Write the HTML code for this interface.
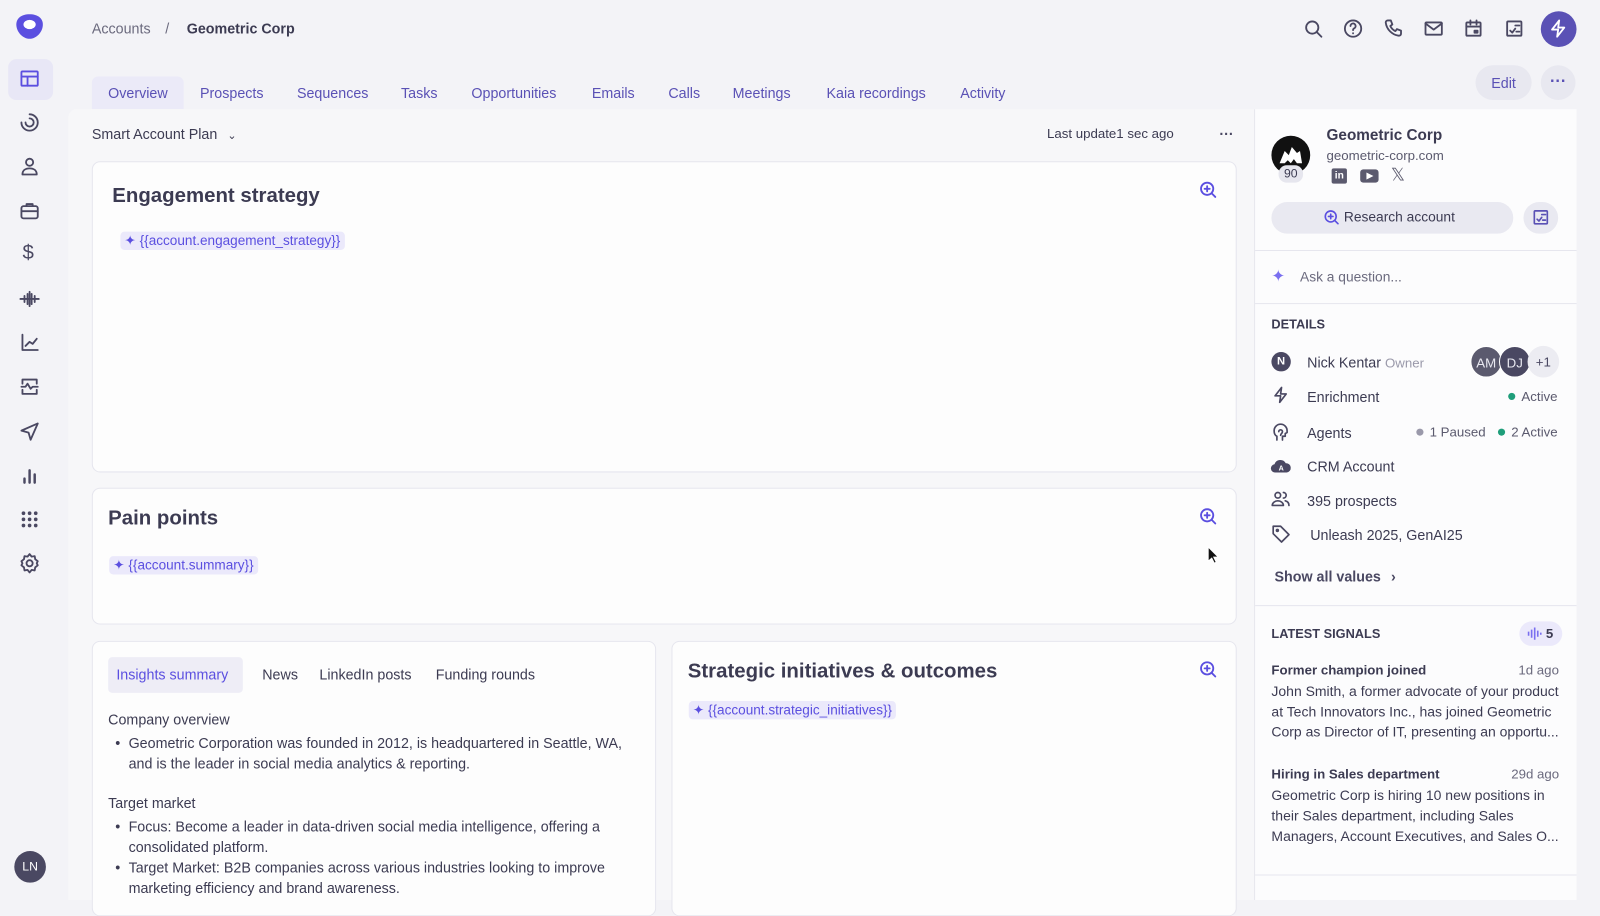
<!DOCTYPE html>
<html><head><meta charset="utf-8"><style>
*{box-sizing:border-box;margin:0;padding:0}
body{width:1600px;height:900px;overflow:hidden;background:#f3f3f7;font-family:"Liberation Sans",sans-serif;color:#3c3b52}
#w{position:absolute;left:0;top:0;width:1568px;height:882px;transform:scale(1.020408);transform-origin:0 0}
.a{position:absolute}
.ic{position:absolute;width:22px;height:22px;fill:none;stroke:#4a4862;stroke-width:1.8;stroke-linecap:round;stroke-linejoin:round}
.t{position:absolute;font-size:14px;white-space:nowrap}
.tab{position:absolute;top:83px;font-size:14px;color:#5a51b5}
.card{position:absolute;background:#fdfdfd;border:1px solid #e6e6ee;border-radius:8px}
.chip{position:absolute;background:#ebe9fb;color:#5b4fe0;font-size:13.3px;border-radius:4px;padding:1px 4px;white-space:nowrap}
.h{position:absolute;font-size:20px;font-weight:bold;color:#3c3b52;white-space:nowrap}
.zoom{position:absolute;width:18px;height:18px;fill:none;stroke:#5b4fe0;stroke-width:1.8;stroke-linecap:round}
.dot{display:inline-block;width:7px;height:7px;border-radius:50%;margin-right:6px;vertical-align:1px}
.li{position:absolute;font-size:14px;color:#3c3b52;line-height:20px}
</style></head><body><div id="w">
<!-- sidebar -->
<svg class="a" style="left:15px;top:13px" width="28" height="26" viewBox="0 0 28 26"><path d="M14 1C6 1 1 5 1 11c0 7 6 14 13 14s13-7 13-14C27 5 22 1 14 1z" fill="#5b4fe0"/><ellipse cx="14" cy="11" rx="6" ry="4.5" fill="#fff"/></svg>
<div class="a" style="left:8px;top:58px;width:44px;height:40px;background:#e8e7f6;border-radius:8px"></div>
<svg class="ic" style="left:18px;top:66px;stroke:#5b4fe0" viewBox="0 0 22 22"><rect x="3" y="4" width="16" height="14" rx="1"/><path d="M3 9h16M9 9v9"/></svg>
<svg class="ic" style="left:18px;top:109px" viewBox="0 0 22 22"><path d="M11 3a8 8 0 1 1-8 8"/><path d="M11 7a4 4 0 1 1-4 4"/></svg>
<svg class="ic" style="left:18px;top:152px" viewBox="0 0 22 22"><circle cx="11" cy="7" r="3.5"/><path d="M4 19c0-4 3-6 7-6s7 2 7 6z"/></svg>
<svg class="ic" style="left:18px;top:196px" viewBox="0 0 22 22"><rect x="3" y="6" width="16" height="12" rx="2"/><path d="M8 6V4h6v2M3 11h16"/></svg>
<div class="t" style="left:22px;top:237px;font-size:20px;color:#4a4862">$</div>
<svg class="ic" style="left:18px;top:282px" viewBox="0 0 22 22"><path d="M2 11h18M6 8v6M9 6v10M11 4v14M13 6v10M16 8v6"/></svg>
<svg class="ic" style="left:18px;top:325px" viewBox="0 0 22 22"><path d="M4 3v15h15M7 14l4-4 3 2 4-5"/></svg>
<svg class="ic" style="left:18px;top:368px" viewBox="0 0 22 22"><path d="M4 8V4h14v4M4 14v4h14v-4M3 11h4l2-3 3 5 2-2h5"/></svg>
<svg class="ic" style="left:18px;top:412px" viewBox="0 0 22 22"><path d="M19 3L3 10l7 2 2 7z"/></svg>
<svg class="ic" style="left:18px;top:455px" viewBox="0 0 22 22"><path d="M6 18v-4M11 18V6M16 18v-8" stroke-width="2.4"/></svg>
<svg class="ic" style="left:18px;top:498px" viewBox="0 0 22 22"><g fill="#4a4862" stroke="none"><circle cx="5" cy="5" r="1.8"/><circle cx="11" cy="5" r="1.8"/><circle cx="17" cy="5" r="1.8"/><circle cx="5" cy="11" r="1.8"/><circle cx="11" cy="11" r="1.8"/><circle cx="17" cy="11" r="1.8"/><circle cx="5" cy="17" r="1.8"/><circle cx="11" cy="17" r="1.8"/><circle cx="17" cy="17" r="1.8"/></g></svg>
<svg class="ic" style="left:18px;top:541px" viewBox="0 0 22 22"><circle cx="11" cy="11" r="3"/><path d="M11 2l2 2.5 3-.5.5 3L19 9l-1 2 1 2-2.5 2-.5 3-3-.5L11 20l-2-2.5-3 .5-.5-3L3 13l1-2-1-2 2.5-2 .5-3 3 .5z"/></svg>
<div class="a" style="left:14px;top:834px;width:31px;height:31px;border-radius:50%;background:#4a4862;color:#fff;font-size:12px;text-align:center;line-height:31px">LN</div>
<!-- header -->
<div class="t" style="left:90px;top:20px;color:#6b6a7e">Accounts</div>
<div class="t" style="left:162px;top:20px;color:#6b6a7e">/</div>
<div class="t" style="left:183px;top:20px;font-weight:bold;color:#3c3b52">Geometric Corp</div>
<svg class="ic" style="left:1276px;top:17px" viewBox="0 0 22 22"><circle cx="10" cy="10" r="6"/><path d="M14.5 14.5L19 19"/></svg>
<svg class="ic" style="left:1315px;top:17px" viewBox="0 0 22 22"><circle cx="11" cy="11" r="8"/><path d="M8.5 8.5a2.5 2.5 0 1 1 3.5 2.3c-.7.4-1 .9-1 1.7M11 15.5v.2"/></svg>
<svg class="ic" style="left:1355px;top:17px" viewBox="0 0 22 22"><path d="M5 3h3l1.5 4-2 1.5a10 10 0 0 0 5 5l1.5-2 4 1.5v3a2 2 0 0 1-2 2A15 15 0 0 1 3 5a2 2 0 0 1 2-2z"/></svg>
<svg class="ic" style="left:1394px;top:17px" viewBox="0 0 22 22"><rect x="3" y="5" width="16" height="12" rx="1"/><path d="M3 6l8 6 8-6"/></svg>
<svg class="ic" style="left:1433px;top:17px" viewBox="0 0 22 22"><rect x="4" y="5" width="14" height="13" rx="1"/><path d="M4 9h14M8 3v4M14 3v4"/><rect x="12" y="13" width="3" height="2" fill="#4a4862"/></svg>
<svg class="ic" style="left:1473px;top:17px" viewBox="0 0 22 22"><rect x="4" y="4" width="14" height="14" rx="1"/><path d="M7 13l2 2 3-4M12 8h4M13 14h3"/></svg>
<div class="a" style="left:1510px;top:11px;width:35px;height:35px;border-radius:50%;background:#5a51b5"></div>
<svg class="ic" style="left:1516px;top:17px;stroke:#fff" viewBox="0 0 22 22"><path d="M12 3L5 12h6l-1 7 7-9h-6z"/></svg>
<!-- tabs -->
<div class="a" style="left:90px;top:75px;width:90px;height:32px;background:#ebeaf8;border-radius:6px 6px 0 0"></div>
<div class="tab" style="left:106px">Overview</div>
<div class="tab" style="left:196px">Prospects</div>
<div class="tab" style="left:291px">Sequences</div>
<div class="tab" style="left:393px">Tasks</div>
<div class="tab" style="left:462px">Opportunities</div>
<div class="tab" style="left:580px">Emails</div>
<div class="tab" style="left:655px">Calls</div>
<div class="tab" style="left:718px">Meetings</div>
<div class="tab" style="left:810px">Kaia recordings</div>
<div class="tab" style="left:941px">Activity</div>
<div class="a" style="left:1446px;top:64px;width:55px;height:34px;border-radius:17px;background:#e8e8f0;color:#5a51b5;font-size:14px;text-align:center;line-height:34px">Edit</div>
<div class="a" style="left:1510px;top:64px;width:34px;height:34px;border-radius:17px;background:#e8e8f0;color:#5a51b5;font-size:16px;text-align:center;line-height:34px;font-weight:bold">···</div>
<!-- main area -->
<div class="a" style="left:67px;top:107px;width:1162px;height:775px;background:#f7f7f9;border-radius:8px 0 0 0"></div>
<div class="t" style="left:90px;top:123px;color:#3c3b52">Smart Account Plan <span style="font-size:11px;margin-left:6px">&#8964;</span></div>
<div class="t" style="left:1026px;top:123px;font-size:13px;color:#3c3b52">Last update1 sec ago</div>
<div class="t" style="left:1195px;top:123px;font-weight:bold;color:#4a4862">···</div>
<div class="card" style="left:90px;top:158px;width:1122px;height:305px"></div>
<div class="h" style="left:110px;top:181px">Engagement strategy</div>
<div class="chip" style="left:118px;top:227px">✦ {{account.engagement_strategy}}</div>
<svg class="zoom" style="left:1175px;top:177px" viewBox="0 0 18 18"><circle cx="8" cy="8" r="6"/><path d="M12.5 12.5L16 16M8 5.5v5M5.5 8h5"/></svg>
<div class="card" style="left:90px;top:478px;width:1122px;height:134px"></div>
<div class="h" style="left:106px;top:497px">Pain points</div>
<div class="chip" style="left:107px;top:545px">✦ {{account.summary}}</div>
<svg class="zoom" style="left:1175px;top:497px" viewBox="0 0 18 18"><circle cx="8" cy="8" r="6"/><path d="M12.5 12.5L16 16M8 5.5v5M5.5 8h5"/></svg>
<svg class="a" style="left:1183px;top:535px" width="12" height="18" viewBox="0 0 12 18"><path d="M1 1v14l3.5-3 2.5 5 2-1-2.5-5H11z" fill="#111" stroke="#fff" stroke-width="1"/></svg>
<div class="card" style="left:90px;top:628px;width:553px;height:270px"></div>
<div class="a" style="left:106px;top:644px;width:132px;height:35px;background:#eeedf6;border-radius:4px"></div>
<div class="t" style="left:114px;top:653px;color:#5b4fe0">Insights summary</div>
<div class="t" style="left:257px;top:653px">News</div>
<div class="t" style="left:313px;top:653px">LinkedIn posts</div>
<div class="t" style="left:427px;top:653px">Funding rounds</div>
<div class="t" style="left:106px;top:697px">Company overview</div>
<div class="li" style="left:113px;top:718px">•</div>
<div class="li" style="left:126px;top:718px;width:510px">Geometric Corporation was founded in 2012, is headquartered in Seattle, WA, and is the leader in social media analytics &amp; reporting.</div>
<div class="t" style="left:106px;top:779px">Target market</div>
<div class="li" style="left:113px;top:800px">•</div>
<div class="li" style="left:126px;top:800px;width:490px">Focus: Become a leader in data-driven social media intelligence, offering a consolidated platform.</div>
<div class="li" style="left:113px;top:840px">•</div>
<div class="li" style="left:126px;top:840px;width:490px">Target Market: B2B companies across various industries looking to improve marketing efficiency and brand awareness.</div>
<div class="card" style="left:658px;top:628px;width:554px;height:270px"></div>
<div class="h" style="left:674px;top:647px">Strategic initiatives &amp; outcomes</div>
<div class="chip" style="left:675px;top:687px">✦ {{account.strategic_initiatives}}</div>
<svg class="zoom" style="left:1175px;top:647px" viewBox="0 0 18 18"><circle cx="8" cy="8" r="6"/><path d="M12.5 12.5L16 16M8 5.5v5M5.5 8h5"/></svg>
<!-- right panel -->
<div class="a" style="left:1229px;top:107px;width:316px;height:775px;background:#fcfcfd;border-left:1px solid #e6e6ee"></div>
<div class="a" style="left:1246px;top:133px;width:38px;height:38px;border-radius:50%;background:#111"></div>
<svg class="a" style="left:1252px;top:140px" width="26" height="22" viewBox="0 0 26 22"><path d="M2 20l5-12 4 4 3-8 5 6 3-2 2 12h-5l-3-4-3 4-3-3-3 3z" fill="#fff"/></svg>
<div class="a" style="left:1253px;top:162px;width:24px;height:17px;border-radius:8px;background:#e6e6ee;font-size:12px;text-align:center;line-height:17px">90</div>
<div class="t" style="left:1300px;top:124px;font-size:15px;font-weight:bold">Geometric Corp</div>
<div class="t" style="left:1300px;top:145px;font-size:13px;color:#5b5a6e">geometric-corp.com</div>
<div class="a" style="left:1305px;top:165px;width:15px;height:15px;background:#5b5a6e;border-radius:2px;color:#fff;font-size:10px;font-weight:bold;text-align:center;line-height:15px">in</div>
<div class="a" style="left:1333px;top:166px;width:18px;height:13px;background:#5b5a6e;border-radius:3px"></div>
<svg class="a" style="left:1339px;top:169px" width="7" height="7"><path d="M0 0l7 3.5L0 7z" fill="#fff"/></svg>
<div class="t" style="left:1363px;top:162px;font-size:17px;color:#5b5a6e">𝕏</div>
<div class="a" style="left:1246px;top:198px;width:237px;height:31px;border-radius:16px;background:#e9e9f1"></div>
<svg class="zoom" style="left:1297px;top:205px;width:16px;height:16px" viewBox="0 0 18 18"><circle cx="8" cy="8" r="6"/><path d="M12.5 12.5L16 16M8 5.5v5M5.5 8h5"/></svg>
<div class="t" style="left:1317px;top:205px;font-size:13.5px">Research account</div>
<div class="a" style="left:1493px;top:198px;width:34px;height:31px;border-radius:16px;background:#e9e9f1"></div>
<svg class="ic" style="left:1500px;top:203px;stroke:#5a51b5;width:20px;height:20px" viewBox="0 0 22 22"><rect x="4" y="4" width="14" height="14" rx="1"/><path d="M7 13l2 2 3-4M12 8h4M13 14h3"/></svg>
<div class="a" style="left:1230px;top:245px;width:315px;border-top:1px solid #e6e6ee"></div>
<div class="t" style="left:1246px;top:261px;font-size:16px;color:#7a6ff0">✦</div>
<div class="t" style="left:1274px;top:264px;font-size:13.5px;color:#6b6a7e">Ask a question...</div>
<div class="a" style="left:1230px;top:297px;width:315px;border-top:1px solid #e6e6ee"></div>
<div class="t" style="left:1246px;top:311px;font-size:12.5px;font-weight:bold">DETAILS</div>
<div class="a" style="left:1246px;top:345px;width:19px;height:19px;border-radius:50%;background:#4a4862;color:#fff;font-size:11px;text-align:center;line-height:19px;font-weight:bold">N</div>
<div class="t" style="left:1281px;top:347px">Nick Kentar <span style="font-size:13px;color:#9a99aa">Owner</span></div>
<div class="a" style="left:1441px;top:339px;width:31px;height:31px;border-radius:50%;background:#5b5a6e;color:#e8e8f0;font-size:13px;text-align:center;line-height:31px;border:1px solid #fff">AM</div>
<div class="a" style="left:1469px;top:339px;width:31px;height:31px;border-radius:50%;background:#4a4862;color:#e8e8f0;font-size:13px;text-align:center;line-height:31px;border:1px solid #fff">DJ</div>
<div class="a" style="left:1497px;top:339px;width:31px;height:31px;border-radius:50%;background:#ececf2;color:#4a4862;font-size:13px;text-align:center;line-height:31px">+1</div>
<svg class="ic" style="left:1245px;top:377px;width:20px;height:20px" viewBox="0 0 22 22"><path d="M12 3L5 12h6l-1 7 7-9h-6z"/></svg>
<div class="t" style="left:1281px;top:381px">Enrichment</div>
<div class="t" style="left:1478px;top:381px;font-size:13px;color:#5b5a6e"><span class="dot" style="background:#1f9e7a"></span>Active</div>
<svg class="ic" style="left:1245px;top:413px;width:20px;height:20px" viewBox="0 0 22 22"><path d="M7 20v-4c-2-1-3-3-3-6a7 7 0 0 1 14 0v2l-2 1v3h-3v4M9 11a2 2 0 1 1 4 0c0 2-2 2-2 4"/></svg>
<div class="t" style="left:1281px;top:416px">Agents</div>
<div class="t" style="left:1388px;top:416px;font-size:13px;color:#5b5a6e"><span class="dot" style="background:#9a99aa"></span>1 Paused</div>
<div class="t" style="left:1468px;top:416px;font-size:13px;color:#5b5a6e"><span class="dot" style="background:#1f9e7a"></span>2 Active</div>
<svg class="a" style="left:1245px;top:448px" width="20" height="16" viewBox="0 0 20 16"><path d="M5 15a4 4 0 0 1-1-8 6 6 0 0 1 11-1 4.5 4.5 0 0 1 1 9z" fill="#4a4862"/><text x="8" y="13" font-size="7" fill="#fff" font-family="Liberation Sans" font-weight="bold">A</text></svg>
<div class="t" style="left:1281px;top:449px">CRM Account</div>
<svg class="ic" style="left:1245px;top:479px;width:20px;height:20px" viewBox="0 0 22 22"><circle cx="8" cy="7" r="3"/><path d="M2 18c0-3 3-5 6-5s6 2 6 5zM14 4a3 3 0 0 1 0 6M16 13c2 .5 4 2 4 5"/></svg>
<div class="t" style="left:1281px;top:483px">395 prospects</div>
<svg class="ic" style="left:1245px;top:513px;width:20px;height:20px" viewBox="0 0 22 22"><path d="M3 3h8l9 9-8 8-9-9z"/><circle cx="7.5" cy="7.5" r="1"/></svg>
<div class="t" style="left:1284px;top:516px">Unleash 2025, GenAI25</div>
<div class="t" style="left:1249px;top:557px;font-weight:bold;color:#4a4862">Show all values <span style="margin-left:6px">›</span></div>
<div class="a" style="left:1230px;top:593px;width:315px;border-top:1px solid #e6e6ee"></div>
<div class="t" style="left:1246px;top:614px;font-size:12.5px;font-weight:bold">LATEST SIGNALS</div>
<div class="a" style="left:1489px;top:609px;width:42px;height:24px;border-radius:12px;background:#ebe9fb"></div>
<svg class="a" style="left:1497px;top:614px" width="14" height="14" viewBox="0 0 14 14"><path d="M1 5v4M4 3v8M7 1v12M10 4v6M13 6v2" stroke="#7a6ff0" stroke-width="1.6"/></svg>
<div class="t" style="left:1515px;top:613px;font-size:13px;font-weight:bold">5</div>
<div class="t" style="left:1246px;top:649px;font-size:13px;font-weight:bold">Former champion joined</div>
<div class="t" style="left:1488px;top:649px;font-size:13px;color:#6b6a7e">1d ago</div>
<div class="li" style="left:1246px;top:668px;width:285px;font-size:13.7px">John Smith, a former advocate of your product at Tech Innovators Inc., has joined Geometric Corp as Director of IT, presenting an opportu...</div>
<div class="t" style="left:1246px;top:751px;font-size:13px;font-weight:bold">Hiring in Sales department</div>
<div class="t" style="left:1481px;top:751px;font-size:13px;color:#6b6a7e">29d ago</div>
<div class="li" style="left:1246px;top:770px;width:285px;font-size:13.7px">Geometric Corp is hiring 10 new positions in their Sales department, including Sales Managers, Account Executives, and Sales O...</div>
<div class="a" style="left:1230px;top:857px;width:315px;border-top:1px solid #e6e6ee"></div>
</div></body></html>
